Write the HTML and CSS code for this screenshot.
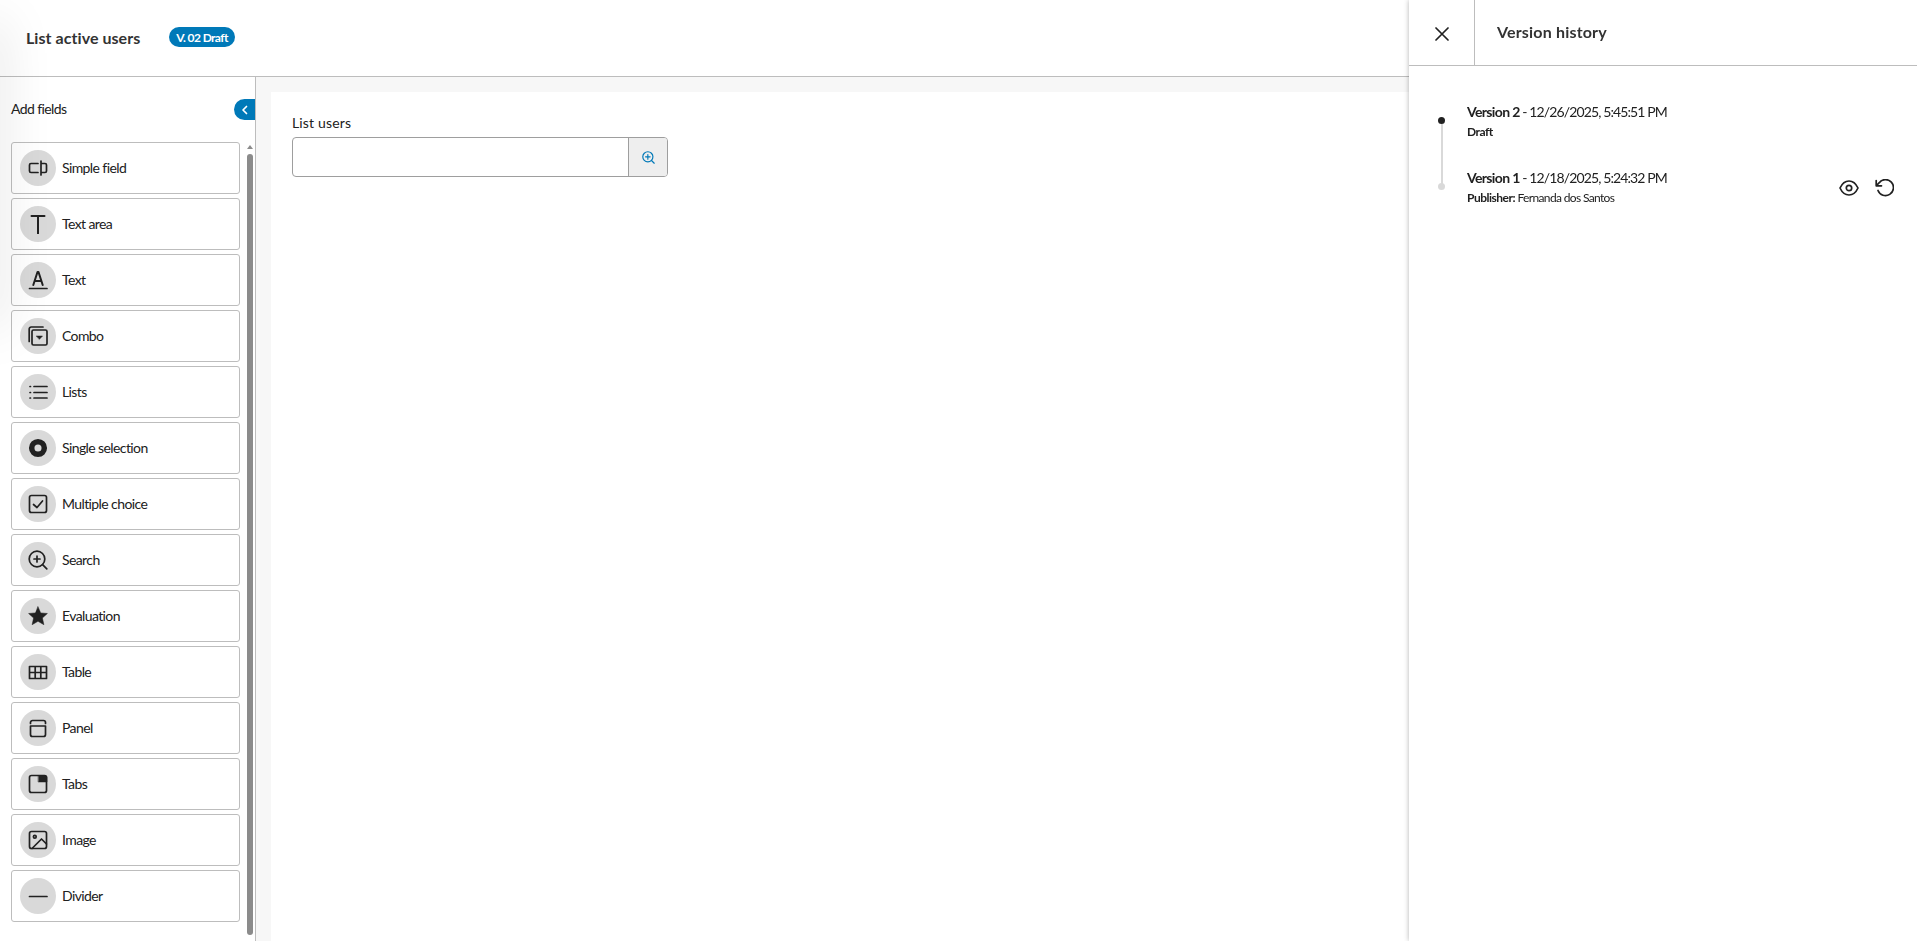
FILE: index.html
```html
<!DOCTYPE html>
<html lang="en">
<head>
    <meta charset="UTF-8">
    <title>List active users</title>
    <link rel="stylesheet" href="styles.css">
</head>
<body>
    <header class="topbar">
        <h1 class="topbar-title">List active users</h1>
        <span class="badge">V. 02 Draft</span>
    </header>

    <div class="workspace">
        <aside class="sidebar">
            <div class="sidebar-header">
                <span class="sidebar-title">Add fields</span>
                <button class="collapse-button" aria-label="Collapse">
                    <svg width="8" height="10" viewBox="0 0 8 10"><path d="M5.500 1.500 2 5l3.500 3.500"/></svg>
                </button>
            </div>
            <div class="sidebar-body">
                <ul class="field-list">
                    <li class="field-item">
                        <span class="field-icon"><svg viewBox="0 0 20 20"><path d="M10 5.500H3a1.500 1.500 0 0 0-1.500 1.500v6A1.500 1.500 0 0 0 3 14.500h7M13 3v14M13 5.500h4A1.500 1.500 0 0 1 18.500 7v6a1.500 1.500 0 0 1-1.500 1.500h-4"/></svg></span>
                        <span class="field-label">Simple field</span>
                    </li>
                    <li class="field-item">
                        <span class="field-icon"><svg viewBox="0 0 20 20"><path class="thick" d="M3.500 2h13M10 2v17.500"/></svg></span>
                        <span class="field-label">Text area</span>
                    </li>
                    <li class="field-item">
                        <span class="field-icon"><svg viewBox="0 0 20 20"><path class="thick" d="M5.300 15 9.500 2h1L14.700 15M6.800 11h6.400"/><path d="M1.500 18.500h17.500"/></svg></span>
                        <span class="field-label">Text</span>
                    </li>
                    <li class="field-item">
                        <span class="field-icon"><svg viewBox="0 0 20 20"><rect x="4" y="4" width="15" height="15" rx="1.500"/><path d="M1.200 15.500V3a2 2 0 0 1 2-2H15"/><path class="solid" d="M8.500 10h6l-3 3.200z"/></svg></span>
                        <span class="field-label">Combo</span>
                    </li>
                    <li class="field-item">
                        <span class="field-icon"><svg viewBox="0 0 20 20"><path d="M2 4.500h.5M6 4.500h13M2 10.500h.5M6 10.500h13M2 16h.5M6 16h13"/></svg></span>
                        <span class="field-label">Lists</span>
                    </li>
                    <li class="field-item">
                        <span class="field-icon"><svg viewBox="0 0 20 20"><circle class="ring" cx="10" cy="10" r="6.300"/></svg></span>
                        <span class="field-label">Single selection</span>
                    </li>
                    <li class="field-item">
                        <span class="field-icon"><svg viewBox="0 0 20 20"><rect x="1.500" y="1.500" width="17" height="17" rx="2"/><path d="m5.500 10.500 3.500 3L14.500 7"/></svg></span>
                        <span class="field-label">Multiple choice</span>
                    </li>
                    <li class="field-item">
                        <span class="field-icon"><svg viewBox="0 0 20 20"><circle cx="9" cy="9" r="7.800"/><path d="M9 6v6M6 9h6M14.600 14.600 18.800 18.800"/></svg></span>
                        <span class="field-label">Search</span>
                    </li>
                    <li class="field-item">
                        <span class="field-icon"><svg viewBox="0 0 20 20"><path class="solid" d="M10 .8l2.700 6.100 6.700.6-5 4.500 1.500 6.700L10 15.300l-5.900 3.400L5.600 12l-5-4.500 6.700-.6z"/></svg></span>
                        <span class="field-label">Evaluation</span>
                    </li>
                    <li class="field-item">
                        <span class="field-icon"><svg viewBox="0 0 20 20"><path d="M1.500 4.500h17v12h-17zM1.500 10.500h17M7.200 4.500v12M12.800 4.500v12"/></svg></span>
                        <span class="field-label">Table</span>
                    </li>
                    <li class="field-item">
                        <span class="field-icon"><svg viewBox="0 0 20 20"><path d="M2.500 5.500v-1a2 2 0 0 1 2-2h11a2 2 0 0 1 2 2v1M2.500 8h15M2.500 8v8.500a2 2 0 0 0 2 2h11a2 2 0 0 0 2-2V8"/></svg></span>
                        <span class="field-label">Panel</span>
                    </li>
                    <li class="field-item">
                        <span class="field-icon"><svg viewBox="0 0 20 20"><rect x="1.500" y="1.500" width="17" height="17" rx="2"/><path class="solid" d="M10.500 1.500H17a2 2 0 0 1 2 2V8h-8.500z"/></svg></span>
                        <span class="field-label">Tabs</span>
                    </li>
                    <li class="field-item">
                        <span class="field-icon"><svg viewBox="0 0 20 20"><rect x="1.500" y="1.500" width="17" height="17" rx="2"/><circle cx="6.800" cy="6.800" r="1.400"/><path d="M4 18.500l9.500-9.500 5 5"/></svg></span>
                        <span class="field-label">Image</span>
                    </li>
                    <li class="field-item">
                        <span class="field-icon"><svg viewBox="0 0 20 20"><path d="M1.500 10.500h17.500"/></svg></span>
                        <span class="field-label">Divider</span>
                    </li>
                </ul>
                <div class="scrollbar">
                    <span class="scrollbar-arrow"></span>
                    <span class="scrollbar-thumb"></span>
                </div>
            </div>
        </aside>

        <main class="stage">
            <div class="canvas">
                <label class="input-label" for="list-users">List users</label>
                <div class="input-group">
                    <input class="input" id="list-users" type="text">
                    <button class="input-addon" aria-label="Search">
                        <svg width="13" height="13" viewBox="0 0 20 20"><circle cx="9" cy="9" r="7.800"/><path d="M9 5.500v7M5.500 9h7M14.600 14.600 18.800 18.800"/></svg>
                    </button>
                </div>
            </div>
        </main>
    </div>

    <div class="edge-shadow"></div>

    <section class="drawer">
        <div class="drawer-header">
            <button class="drawer-close" aria-label="Close">
                <svg width="14" height="14" viewBox="0 0 14 14"><path d="M1 1l12 12M13 1 1 13"/></svg>
            </button>
            <h2 class="drawer-title">Version history</h2>
        </div>
        <ol class="timeline">
            <li class="version current">
                <span class="version-marker"></span>
                <div class="version-info">
                    <p class="version-name"><strong>Version 2</strong> - 12/26/2025, 5:45:51 PM</p>
                    <p class="version-meta"><strong>Draft</strong></p>
                </div>
            </li>
            <li class="version">
                <span class="version-marker"></span>
                <div class="version-info">
                    <p class="version-name"><strong>Version 1</strong> - 12/18/2025, 5:24:32 PM</p>
                    <p class="version-meta"><strong>Publisher:</strong> Fernanda dos Santos</p>
                </div>
                <div class="version-actions">
                    <svg width="20" height="16" viewBox="0 0 20 16"><path d="M1 8c2-4.300 5.200-7 9-7s7 2.700 9 7c-2 4.300-5.200 7-9 7s-7-2.700-9-7z"/><circle cx="10" cy="8" r="2.700"/></svg>
                    <svg width="19" height="18" viewBox="0 0 19 18"><path d="M1.200 1.500v5.300h5.300M1.500 6.500 4 3.900A8 8 0 1 1 3 11.500"/></svg>
                </div>
            </li>
        </ol>
    </section>
</body>
</html>
```
FILE: styles.css
```css
* {
    box-sizing: border-box;
}

body {
    margin: 0;
    height: 100vh;
    overflow: hidden;
    display: flex;
    flex-direction: column;
    font-family: Lato, sans-serif;
    font-size: 14px;
    color: #212121;
    background-color: #fff;
}

h1, h2, p, ul, ol {
    margin: 0;
    padding: 0;
    list-style: none;
}

button {
    border: none;
    padding: 0;
    display: flex;
    align-items: center;
    justify-content: center;
    background: none;
}

svg {
    fill: none;
    stroke: #212121;
    stroke-width: 1.7;
    stroke-linecap: round;
    stroke-linejoin: round;
}

/* Top bar */
.topbar {
    flex: none;
    display: flex;
    align-items: center;
    height: 77px;
    padding-left: 26px;
    border-bottom: 1px solid #bdbdbd;
}

.topbar-title {
    width: 143px;
    font-size: 16px;
    line-height: 20px;
    letter-spacing: 0.06px;
    color: #333;
}

.badge {
    width: 66px;
    height: 20px;
    margin-bottom: 2px;
    border-radius: 10px;
    background-color: #0079b8;
    color: #fff;
    font-size: 12px;
    font-weight: bold;
    line-height: 21px;
    letter-spacing: -0.6px;
    text-align: center;
}

/* Sidebar */
.workspace {
    flex: 1;
    display: flex;
    min-height: 0;
}

.sidebar {
    width: 256px;
    border-right: 1px solid #bdbdbd;
}

.sidebar-header {
    display: flex;
    align-items: center;
    justify-content: space-between;
    height: 65px;
    padding-left: 11px;
}

.sidebar-title {
    padding-bottom: 2px;
    letter-spacing: -0.6px;
}

.collapse-button {
    width: 21px;
    height: 21px;
    border-radius: 11px 0 0 11px;
    background-color: #0079b8;
}

.collapse-button svg {
    stroke: #fff;
}

.sidebar-body {
    display: flex;
    padding-left: 11px;
}

.field-list {
    width: 229px;
    display: flex;
    flex-direction: column;
    gap: 4px;
}

.field-item {
    display: flex;
    align-items: center;
    height: 52px;
    padding-left: 8px;
    border: 1px solid #bdbdbd;
    border-radius: 3px;
}

.field-icon {
    display: flex;
    align-items: center;
    justify-content: center;
    width: 36px;
    height: 36px;
    margin-right: 6px;
    border-radius: 50%;
    background-color: #d9d9d9;
}

.field-icon svg {
    width: 20px;
    height: 20px;
}

.field-icon .thick {
    stroke-width: 2;
}

.field-icon .ring {
    stroke-width: 5.5;
}

.field-icon .solid {
    fill: #212121;
    stroke-width: 0.5;
}

.field-label {
    letter-spacing: -0.6px;
    padding-bottom: 2px;
}

.scrollbar {
    display: flex;
    flex-direction: column;
    align-items: center;
    gap: 5px;
    width: 10px;
    height: 793px;
    margin-left: 5px;
    padding-top: 3px;
}

.scrollbar-arrow {
    border: 3px solid transparent;
    border-top: 0;
    border-bottom: 4px solid #8b8b8b;
}

.scrollbar-thumb {
    flex: 1;
    width: 6px;
    border-radius: 3px;
    background-color: #8b8b8b;
}

/* Form canvas */
.stage {
    flex: 1;
    display: flex;
    padding: 15px 0 0 15px;
    background-color: #f7f7f7;
}

.canvas {
    flex: 1;
    padding: 21px;
    background-color: #fff;
}

.input-label {
    display: block;
    height: 24px;
    line-height: 20px;
    letter-spacing: 0.15px;
}

.input-group {
    display: flex;
    width: 376px;
    height: 40px;
    border: 1px solid #9e9e9e;
    border-radius: 4px;
    overflow: hidden;
}

.input {
    flex: 1;
    min-width: 0;
    border: none;
    background: none;
}

.input-addon {
    width: 39px;
    border-left: 1px solid #9e9e9e;
    background-color: #eee;
}

.input-addon svg {
    stroke: #0079b8;
    stroke-width: 1.8;
}

/* Shadow of the closed side menu */
.edge-shadow {
    position: fixed;
    top: 20px;
    left: -20px;
    width: 20px;
    height: 310px;
    box-shadow: 0 0 50px rgba(0, 0, 0, 0.15);
}

/* Version history */
.drawer {
    position: fixed;
    top: 0;
    right: 0;
    width: 508px;
    height: 100%;
    background-color: #fff;
    box-shadow: 0 0 5px rgba(0, 0, 0, 0.3);
}

.drawer-header {
    display: flex;
    height: 66px;
    border-bottom: 1px solid #bdbdbd;
}

.drawer-close {
    width: 66px;
    padding-top: 3px;
    border-right: 1px solid #bdbdbd;
}

.drawer-title {
    padding-left: 22px;
    font-size: 16px;
    line-height: 63px;
    letter-spacing: 0.18px;
    color: #333;
}

.timeline {
    padding: 36px 23px 0 27px;
}

.version {
    position: relative;
    display: flex;
    height: 66px;
}

.version-marker {
    width: 7px;
    height: 7px;
    margin: 15px 22px 0 2px;
    border-radius: 50%;
    background-color: #d9d9d9;
}

.current .version-marker {
    background-color: #212121;
}

/* Line that joins the current version to the one below it */
.current::after {
    content: "";
    position: absolute;
    top: 22px;
    left: 5px;
    width: 2px;
    height: 60px;
    background-color: #d9d9d9;
}

.version-info {
    flex: 1;
}

.version-name {
    line-height: 20px;
    letter-spacing: -0.88px;
}

.version-name strong {
    letter-spacing: -0.65px;
}

.version-meta {
    font-size: 12px;
    line-height: 20px;
    letter-spacing: -0.65px;
}

.version-meta strong {
    letter-spacing: -0.5px;
}

.version-actions {
    display: flex;
    align-items: center;
    gap: 16px;
    height: 40px;
}
```
